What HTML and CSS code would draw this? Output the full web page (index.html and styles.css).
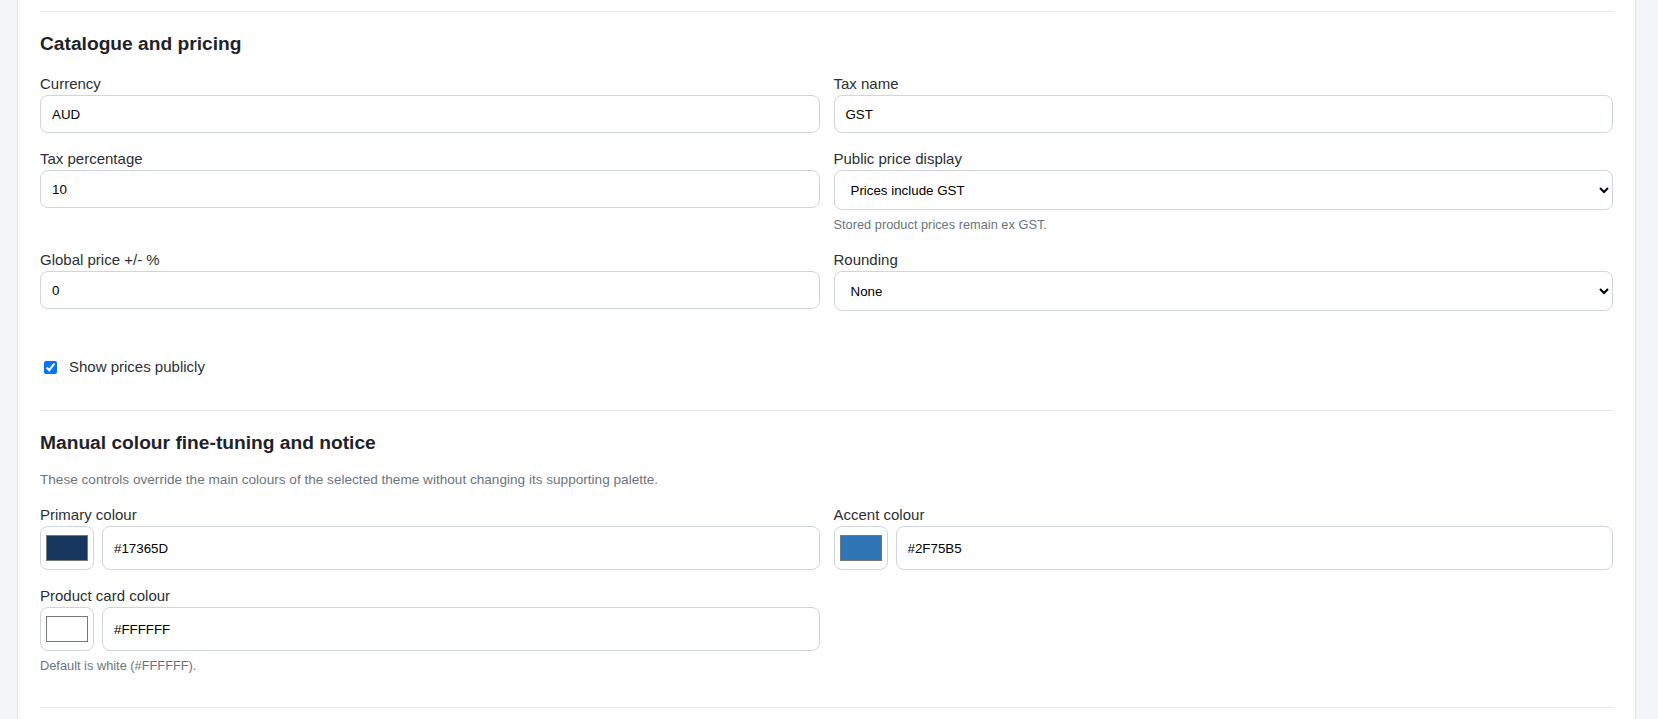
FILE: index.html
```html
<!DOCTYPE html>
<html lang="en">

<head>
    <meta charset="UTF-8">
    <meta name="viewport" content="width=device-width, initial-scale=1.0">
    <title>Store settings</title>
    <link rel="stylesheet" href="styles.css">
</head>

<body>
    <div class="settings-card">
        <section class="settings-section">
            <h2>Catalogue and pricing</h2>
            <div class="form-grid">
                <div class="field">
                    <label for="currency">Currency</label>
                    <input class="form-input" id="currency" type="text" value="AUD">
                </div>
                <div class="field">
                    <label for="taxName">Tax name</label>
                    <input class="form-input" id="taxName" type="text" value="GST">
                </div>
                <div class="field">
                    <label for="taxPercent">Tax percentage</label>
                    <input class="form-input" id="taxPercent" type="text" value="10">
                </div>
                <div class="field">
                    <label for="priceDisplay">Public price display</label>
                    <select class="form-select" id="priceDisplay">
                        <option selected>Prices include GST</option>
                        <option>Prices exclude GST</option>
                    </select>
                    <p class="hint">Stored product prices remain ex GST.</p>
                </div>
                <div class="field">
                    <label for="globalPrice">Global price +/- %</label>
                    <input class="form-input" id="globalPrice" type="text" value="0">
                </div>
                <div class="field">
                    <label for="rounding">Rounding</label>
                    <select class="form-select" id="rounding">
                        <option selected>None</option>
                        <option>Nearest 0.05</option>
                        <option>Nearest 1.00</option>
                    </select>
                </div>
            </div>
            <div class="check-row">
                <input type="checkbox" id="showPrices" checked>
                <label for="showPrices">Show prices publicly</label>
            </div>
        </section>

        <section class="settings-section">
            <h2>Manual colour fine-tuning and notice</h2>
            <p class="section-note">These controls override the main colours of the selected theme without changing its supporting palette.</p>
            <div class="form-grid">
                <div class="field">
                    <label for="primaryColour">Primary colour</label>
                    <div class="colour-pair">
                        <input class="colour-swatch" type="color" value="#17365d">
                        <input class="form-input colour-text" id="primaryColour" type="text" value="#17365D">
                    </div>
                </div>
                <div class="field">
                    <label for="accentColour">Accent colour</label>
                    <div class="colour-pair">
                        <input class="colour-swatch" type="color" value="#2f75b5">
                        <input class="form-input colour-text" id="accentColour" type="text" value="#2F75B5">
                    </div>
                </div>
                <div class="field">
                    <label for="cardColour">Product card colour</label>
                    <div class="colour-pair">
                        <input class="colour-swatch" type="color" value="#ffffff">
                        <input class="form-input colour-text" id="cardColour" type="text" value="#FFFFFF">
                    </div>
                    <p class="hint">Default is white (#FFFFFF).</p>
                </div>
            </div>
        </section>

        <section class="settings-section last"></section>
    </div>
</body>

</html>
```

FILE: styles.css
```css
body {
    margin: 0;
    padding: 0;
    background-color: #f4f5f9;
    font-family: "Liberation Sans", Arial, sans-serif;
    color: #212529;
}

*,
*:before,
*:after {
    box-sizing: border-box;
}

.settings-card {
    background-color: #fff;
    margin: 0 22px 0 17px;
    padding: 11px 22px 0;
    border: 1px solid #e3e6ec;
    border-top: none;
}

.settings-section {
    border-top: 1px solid #e3e6ec;
    padding: 20px 0 32px;
}

.settings-section.last {
    padding: 0;
    height: 40px;
}

.settings-section h2 {
    margin: 0 0 16px;
    font-size: 19.2px;
    line-height: 24px;
    font-weight: bold;
    color: #1f2329;
}

.section-note {
    margin: 1px 0 14px;
    font-size: 13.6px;
    line-height: 18px;
    color: #6c757d;
}

.form-grid {
    display: grid;
    grid-template-columns: 1fr 1fr;
    column-gap: 14px;
    row-gap: 14px;
    align-items: start;
}

.field label {
    display: block;
    font-size: 15px;
    line-height: 23px;
    color: #2b2f35;
}

.form-input,
.form-select {
    display: block;
    width: 100%;
    height: 38px;
    padding: 0 11px;
    border: 1px solid #cfd5df;
    border-radius: 8px;
    background-color: #fff;
    font-family: "Liberation Sans", Arial, sans-serif;
    font-size: 13.33px;
    color: #000;
}

.form-select {
    height: 40px;
    padding: 0 8px 0 12px;
}

.hint {
    margin: 6px 0 0;
    font-size: 12.8px;
    line-height: 18px;
    color: #6c757d;
}

.check-row {
    display: flex;
    align-items: center;
    margin-top: 45px;
    font-size: 15px;
    line-height: 22px;
    color: #2b2f35;
}

.check-row input {
    width: 13px;
    height: 13px;
    margin: 0 12px 0 4px;
}

.colour-pair {
    display: flex;
    gap: 8px;
}

.colour-swatch {
    flex: 0 0 54px;
    width: 54px;
    height: 44px;
    padding: 4px 3px;
    border: 1px solid #cfd5df;
    border-radius: 8px;
    background-color: #fff;
    cursor: pointer;
}

.colour-swatch::-webkit-color-swatch-wrapper {
    padding: 4px 2px;
}

.colour-swatch::-webkit-color-swatch {
    border: 1px solid #777;
    border-radius: 0;
}

.colour-text {
    flex: 1;
    height: 44px;
}
```
